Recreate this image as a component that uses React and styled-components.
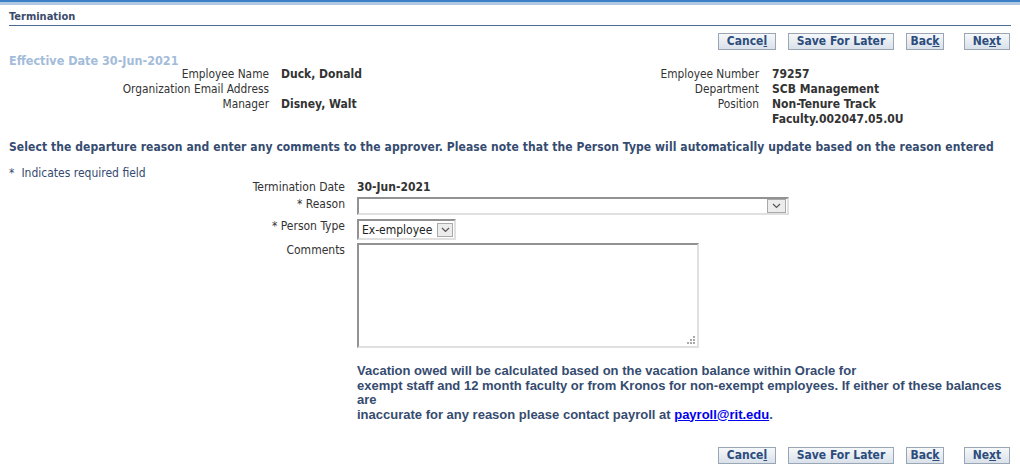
import React from "react";
import styled, { createGlobalStyle } from "styled-components";

const Global = createGlobalStyle`
  html, body { margin: 0; padding: 0; background: #fff; }
  body {
    font-family: "DejaVu Sans Condensed", "DejaVu Sans", sans-serif;
    font-size: 12px;
    color: #333;
  }
`;

const Page = styled.div`
  width: 1020px;
  height: 473px;
  overflow: hidden;
`;

const TopBand = styled.div`
  height: 2px;
  background: #3b7fc7;
  border-bottom: 3px solid #b0c8e2;
`;

const Content = styled.div`
  padding: 5px 9px 0 9px;
`;

const Header = styled.h1`
  margin: 0;
  font-size: 11px;
  font-weight: bold;
  color: #3b4a6b;
  line-height: 14px;
  padding-bottom: 1px;
  border-bottom: 1px solid #4d6a93;
`;

const ButtonBar = styled.div`
  display: flex;
  justify-content: flex-end;
  margin-top: ${(p) => p.$top}px;
  padding-right: 1px;
`;

const Btn = styled.button`
  font-family: inherit;
  font-size: 12px;
  font-weight: bold;
  color: #2c4c7c;
  width: ${(p) => p.$w}px;
  height: 17px;
  margin: 0 0 0 ${(p) => p.$gap || 0}px;
  padding: 0;
  border: 1px solid #9aa6b4;
  background: linear-gradient(#f6f8fa, #d9e1ea);
  line-height: 15px;
  cursor: pointer;
  u { text-decoration: underline; }
`;

const Effective = styled.div`
  font-size: 12.5px;
  font-weight: bold;
  color: #a3bcd9;
  margin-top: 4px;
  line-height: 13px;
`;

const InfoRow = styled.div`
  display: grid;
  grid-template-columns: 501px 1fr;
`;

const InfoTable = styled.div`
  display: grid;
  grid-template-columns: ${(p) => p.$label}px ${(p) => p.$value || "auto"};
  column-gap: ${(p) => p.$gap}px;
  align-content: start;
  line-height: 15px;
`;

const Label = styled.div`
  text-align: right;
  color: #333;
  font-size: 11.8px;
`;

const Value = styled.div`
  font-weight: bold;
  color: #333;
`;

const Instruction = styled.p`
  margin: 13px 0 0 0;
  font-weight: bold;
  color: #354b70;
  line-height: 14px;
  letter-spacing: 0.08px;
  white-space: nowrap;
`;

const Required = styled.div`
  margin-top: 12px;
  color: #354b70;
  line-height: 14px;
  span { margin-right: 7px; }
`;

const Form = styled.div`
  display: grid;
  grid-template-columns: 336px auto;
  column-gap: 12px;
  row-gap: 3px;
  align-items: start;
`;

const FormLabel = styled.div`
  text-align: right;
  line-height: 14px;
  color: #333;
  margin-top: ${(p) => p.$mt || 0}px;
`;

const FormValue = styled.div`
  font-weight: bold;
  line-height: 14px;
`;

const Inset = styled.div`
  box-sizing: border-box;
  border-top: 2px solid #929292;
  border-left: 2px solid #929292;
  border-right: 2px solid #e0e0e0;
  border-bottom: 2px solid #e0e0e0;
  background: #fff;
`;

const SelectBox = styled(Inset)`
  width: ${(p) => p.$w}px;
  height: ${(p) => p.$h}px;
  margin-top: ${(p) => p.$mt || 0}px;
  display: flex;
  align-items: center;
  justify-content: space-between;
  padding-left: 3px;
  padding-right: 1px;
  font-size: 12px;
  color: #222;
`;

const Arrow = styled.div`
  width: ${(p) => p.$w}px;
  height: 14px;
  box-sizing: border-box;
  border: 1px solid #a9a9a9;
  background: #ececec;
  display: flex;
  align-items: center;
  justify-content: center;
`;

const TextArea = styled(Inset)`
  width: 342px;
  height: 105px;
  position: relative;
`;

const Grip = styled.svg`
  position: absolute;
  right: 2px;
  bottom: 2px;
`;

const Note = styled.div`
  margin: 16px 0 0 348px;
  font-family: "Liberation Sans", Arial, sans-serif;
  font-size: 13px;
  font-weight: bold;
  color: #354b70;
  line-height: 14.5px;
  a { color: #0000ee; text-decoration: underline; }
`;

const Chevron = () => (
  <svg width="9" height="6" viewBox="0 0 9 6">
    <path d="M1 1 L4.5 4.5 L8 1" fill="none" stroke="#555" strokeWidth="1.2" />
  </svg>
);

const Buttons = ({ top }) => (
  <ButtonBar $top={top}>
    <Btn $w={58}>Cance<u>l</u></Btn>
    <Btn $w={106} $gap={12}>Save For Later</Btn>
    <Btn $w={38} $gap={12}>Bac<u>k</u></Btn>
    <Btn $w={46} $gap={20}>Ne<u>x</u>t</Btn>
  </ButtonBar>
);

export default function App() {
  return (
    <Page>
      <Global />
      <TopBand />
      <Content>
        <Header>Termination</Header>
        <Buttons top={7} />
        <Effective>Effective Date 30-Jun-2021</Effective>
        <InfoRow>
          <InfoTable $label={260} $gap={12}>
            <Label>Employee Name</Label>
            <Value>Duck, Donald</Value>
            <Label>Organization Email Address</Label>
            <Value></Value>
            <Label>Manager</Label>
            <Value>Disney, Walt</Value>
          </InfoTable>
          <InfoTable $label={249} $gap={13} $value="150px">
            <Label>Employee Number</Label>
            <Value>79257</Value>
            <Label>Department</Label>
            <Value>SCB Management</Value>
            <Label>Position</Label>
            <Value>Non-Tenure Track Faculty.002047.05.0U</Value>
          </InfoTable>
        </InfoRow>
        <Instruction>
          Select the departure reason and enter any comments to the approver. Please note that the Person Type will automatically update based on the reason entered
        </Instruction>
        <Required><span>*</span>Indicates required field</Required>
        <Form>
          <FormLabel>Termination Date</FormLabel>
          <FormValue>30-Jun-2021</FormValue>
          <FormLabel>* Reason</FormLabel>
          <SelectBox $w={432} $h={18}>
            <span></span>
            <Arrow $w={19}><Chevron /></Arrow>
          </SelectBox>
          <FormLabel $mt={1}>* Person Type</FormLabel>
          <SelectBox $w={99} $h={21} $mt={1}>
            <span>Ex-employee</span>
            <Arrow $w={16}><Chevron /></Arrow>
          </SelectBox>
          <FormLabel>Comments</FormLabel>
          <TextArea>
            <Grip width="8" height="8" viewBox="0 0 8 8">
              <rect x="6" y="0" width="2" height="2" fill="#aaa" />
              <rect x="3" y="3" width="2" height="2" fill="#aaa" />
              <rect x="6" y="3" width="2" height="2" fill="#aaa" />
              <rect x="0" y="6" width="2" height="2" fill="#aaa" />
              <rect x="3" y="6" width="2" height="2" fill="#aaa" />
              <rect x="6" y="6" width="2" height="2" fill="#aaa" />
            </Grip>
          </TextArea>
        </Form>
        <Note>
          Vacation owed will be calculated based on the vacation balance within Oracle for
          <br />
          exempt staff and 12 month faculty or from Kronos for non-exempt employees. If either of these balances are
          <br />
          inaccurate for any reason please contact payroll at <a href="#">payroll@rit.edu</a>.
        </Note>
        <Buttons top={25} />
      </Content>
    </Page>
  );
}
